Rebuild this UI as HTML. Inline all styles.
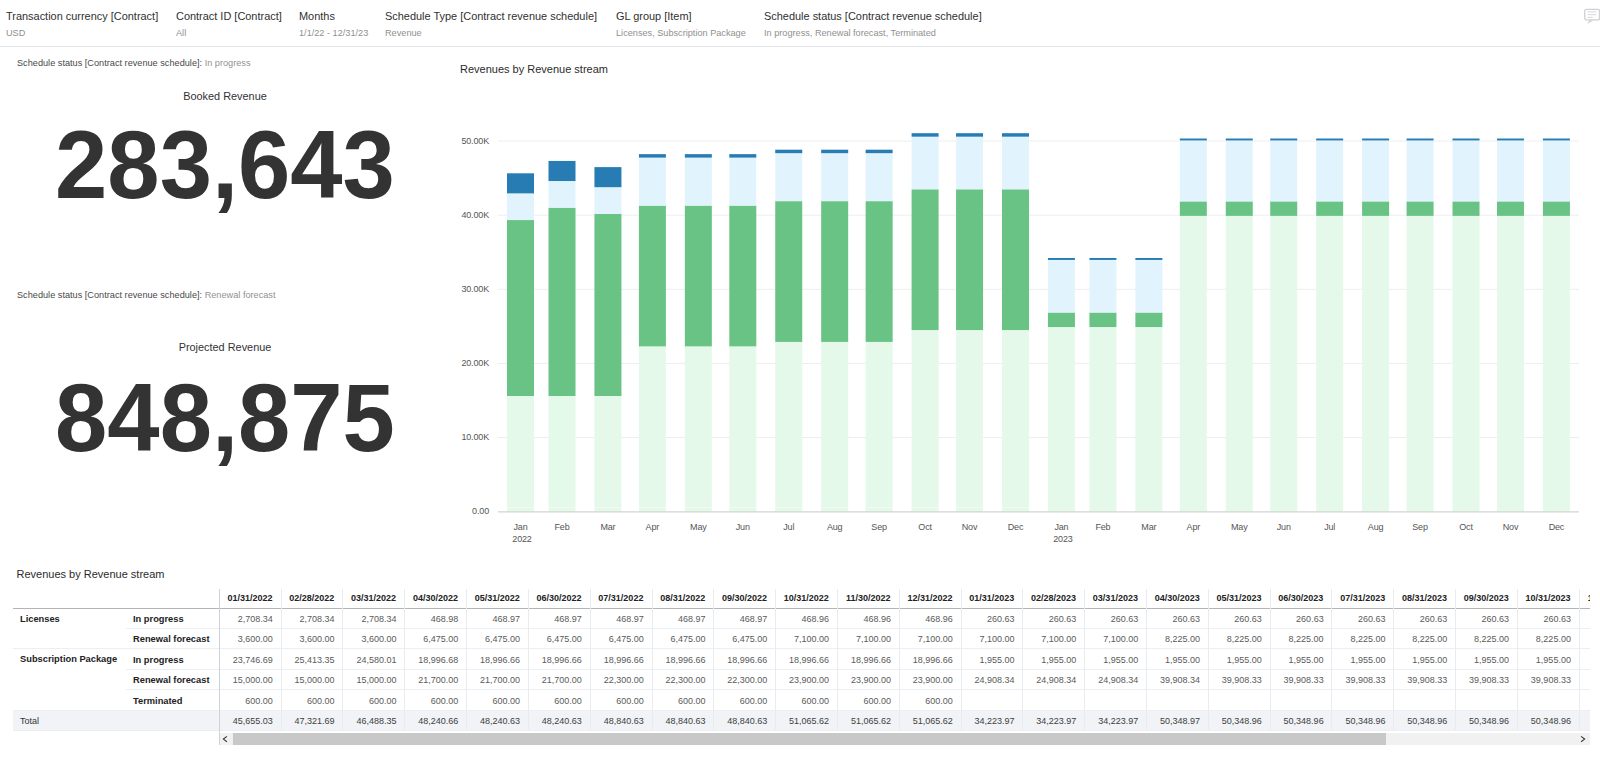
<!DOCTYPE html>
<html lang="en"><head><meta charset="utf-8"><title>Revenue dashboard</title>
<style>
*{box-sizing:border-box}
html,body{margin:0;padding:0;background:#fff}
body{width:1600px;height:758px;overflow:hidden;position:relative;font-family:"Liberation Sans",sans-serif;color:#333}
.hdr{position:absolute;left:0;top:0;width:1600px;height:47px;border-bottom:1px solid #e3e7ed}
.f{position:absolute;top:0;white-space:nowrap}
.f b{position:absolute;left:0;top:9px;font-weight:400;font-size:10.94px;line-height:14px;color:#303030}
.f i{position:absolute;left:0;top:27.5px;font-style:normal;font-size:9.17px;line-height:11px;color:#909090}
.cm{position:absolute;left:1584px;top:8px}
.sl{position:absolute;left:17px;font-size:9.19px;line-height:11px;color:#4a4a4a;white-space:nowrap}
.sl span{color:#929292}
.kt{position:absolute;left:0;width:450px;text-align:center;font-size:10.9px;line-height:14px;color:#333}
.kv{position:absolute;left:0;width:450px;text-align:center;font-weight:700;font-size:94px;line-height:100px;color:#333;white-space:nowrap;transform:scaleY(1.023);transform-origin:50% 50%}
.ct{position:absolute;font-size:11px;line-height:14px;color:#2b2b2b;white-space:nowrap}
.chart{position:absolute;left:0;top:0}
.ax{font-family:"Liberation Sans",sans-serif;font-size:9px;fill:#555;letter-spacing:-0.15px}
.tbl{position:absolute;left:0;top:0;width:1590px;height:758px;overflow:hidden}
.hl{position:absolute;height:1px}
.vl{position:absolute;width:1px;background:#e8ecf1}
.totbg{position:absolute;left:12.6px;width:1577.4px;background:#f1f3f7}
.th{position:absolute;text-align:right;padding-right:8.6px;font-weight:700;font-size:9px;color:#222;white-space:nowrap}
.td{position:absolute;text-align:right;padding-right:8.3px;font-size:9px;color:#5a5a5a;white-space:nowrap}
.td.tot{color:#404040}
.rh{position:absolute;font-weight:700;font-size:9.3px;color:#222;white-space:nowrap}
.rt{position:absolute;font-size:9px;color:#333;white-space:nowrap}
.sb{position:absolute;left:219.8px;top:733.4px;width:1370.2px;height:11.6px;background:#f1f1f1}
.thumb{position:absolute;left:12.9px;top:0;width:1153.5px;height:11.6px;background:#c8c8c8}
.arl{position:absolute;left:1.7px;top:0.8px}
.arr{position:absolute;left:1359.2px;top:0.8px}
</style></head><body>
<div class="hdr">
<div class="f" style="left:6px"><b>Transaction currency [Contract]</b><i>USD</i></div>
<div class="f" style="left:176px"><b>Contract ID [Contract]</b><i>All</i></div>
<div class="f" style="left:299px"><b>Months</b><i>1/1/22 - 12/31/23</i></div>
<div class="f" style="left:385px"><b>Schedule Type [Contract revenue schedule]</b><i>Revenue</i></div>
<div class="f" style="left:616px"><b>GL group [Item]</b><i>Licenses, Subscription Package</i></div>
<div class="f" style="left:764px"><b>Schedule status [Contract revenue schedule]</b><i>In progress, Renewal forecast, Terminated</i></div>
<svg class="cm" width="18" height="18" viewBox="0 0 18 18"><rect x="0.75" y="1.45" width="14.7" height="10.5" rx="1.6" fill="none" stroke="#cdd0d4" stroke-width="1.3"/><path d="M5.4 12.2 L3.3 15.9 L9.6 12.2 Z" fill="#cfd2d6"/><rect x="3.6" y="3.4" width="8.7" height="1" fill="#d6d8db"/><rect x="3.6" y="6.2" width="8.7" height="1" fill="#d6d8db"/><rect x="3.6" y="8.85" width="5.1" height="1" fill="#d6d8db"/></svg>
</div>
<div class="sl" style="top:58px">Schedule status [Contract revenue schedule]: <span>In progress</span></div>
<div class="kt" style="top:89px">Booked Revenue</div>
<div class="kv" style="top:115px">283,643</div>
<div class="sl" style="top:290px">Schedule status [Contract revenue schedule]: <span>Renewal forecast</span></div>
<div class="kt" style="top:340.4px">Projected Revenue</div>
<div class="kv" style="top:368px">848,875</div>
<div class="ct" style="left:460px;top:62px">Revenues by Revenue stream</div>
<svg class="chart" width="1600" height="758" viewBox="0 0 1600 758">
<rect x="498" y="437.00" width="1081" height="1" fill="#eeeeee"/>
<rect x="498" y="362.90" width="1081" height="1" fill="#eeeeee"/>
<rect x="498" y="288.80" width="1081" height="1" fill="#eeeeee"/>
<rect x="498" y="214.70" width="1081" height="1" fill="#eeeeee"/>
<rect x="498" y="140.60" width="1081" height="1" fill="#eeeeee"/>
<rect x="507.00" y="507.15" width="27" height="4.45" fill="#e5f9ea"/>
<rect x="507.00" y="506.70" width="27" height="0.9" fill="#f7fdf9"/>
<rect x="507.00" y="396.00" width="27" height="111.15" fill="#e5f9ea"/>
<rect x="507.00" y="220.04" width="27" height="175.96" fill="#69c385"/>
<rect x="507.00" y="193.37" width="27" height="26.68" fill="#e1f4fd"/>
<rect x="507.00" y="173.30" width="27" height="20.07" fill="#267cb3"/>
<rect x="548.50" y="507.15" width="27" height="4.45" fill="#e5f9ea"/>
<rect x="548.50" y="506.70" width="27" height="0.9" fill="#f7fdf9"/>
<rect x="548.50" y="396.00" width="27" height="111.15" fill="#e5f9ea"/>
<rect x="548.50" y="207.69" width="27" height="188.31" fill="#69c385"/>
<rect x="548.50" y="181.02" width="27" height="26.68" fill="#e1f4fd"/>
<rect x="548.50" y="160.95" width="27" height="20.07" fill="#267cb3"/>
<rect x="594.44" y="507.15" width="27" height="4.45" fill="#e5f9ea"/>
<rect x="594.44" y="506.70" width="27" height="0.9" fill="#f7fdf9"/>
<rect x="594.44" y="396.00" width="27" height="111.15" fill="#e5f9ea"/>
<rect x="594.44" y="213.87" width="27" height="182.14" fill="#69c385"/>
<rect x="594.44" y="187.19" width="27" height="26.68" fill="#e1f4fd"/>
<rect x="594.44" y="167.12" width="27" height="20.07" fill="#267cb3"/>
<rect x="638.90" y="507.15" width="27" height="4.45" fill="#e5f9ea"/>
<rect x="638.90" y="506.70" width="27" height="0.9" fill="#f7fdf9"/>
<rect x="638.90" y="346.36" width="27" height="160.80" fill="#e5f9ea"/>
<rect x="638.90" y="205.59" width="27" height="140.77" fill="#69c385"/>
<rect x="638.90" y="157.61" width="27" height="47.98" fill="#e1f4fd"/>
<rect x="638.90" y="154.14" width="27" height="3.48" fill="#267cb3"/>
<rect x="684.84" y="507.15" width="27" height="4.45" fill="#e5f9ea"/>
<rect x="684.84" y="506.70" width="27" height="0.9" fill="#f7fdf9"/>
<rect x="684.84" y="346.36" width="27" height="160.80" fill="#e5f9ea"/>
<rect x="684.84" y="205.59" width="27" height="140.77" fill="#69c385"/>
<rect x="684.84" y="157.61" width="27" height="47.98" fill="#e1f4fd"/>
<rect x="684.84" y="154.14" width="27" height="3.48" fill="#267cb3"/>
<rect x="729.30" y="507.15" width="27" height="4.45" fill="#e5f9ea"/>
<rect x="729.30" y="506.70" width="27" height="0.9" fill="#f7fdf9"/>
<rect x="729.30" y="346.36" width="27" height="160.80" fill="#e5f9ea"/>
<rect x="729.30" y="205.59" width="27" height="140.77" fill="#69c385"/>
<rect x="729.30" y="157.61" width="27" height="47.98" fill="#e1f4fd"/>
<rect x="729.30" y="154.14" width="27" height="3.48" fill="#267cb3"/>
<rect x="775.24" y="507.15" width="27" height="4.45" fill="#e5f9ea"/>
<rect x="775.24" y="506.70" width="27" height="0.9" fill="#f7fdf9"/>
<rect x="775.24" y="341.91" width="27" height="165.24" fill="#e5f9ea"/>
<rect x="775.24" y="201.15" width="27" height="140.77" fill="#69c385"/>
<rect x="775.24" y="153.17" width="27" height="47.98" fill="#e1f4fd"/>
<rect x="775.24" y="149.69" width="27" height="3.48" fill="#267cb3"/>
<rect x="821.18" y="507.15" width="27" height="4.45" fill="#e5f9ea"/>
<rect x="821.18" y="506.70" width="27" height="0.9" fill="#f7fdf9"/>
<rect x="821.18" y="341.91" width="27" height="165.24" fill="#e5f9ea"/>
<rect x="821.18" y="201.15" width="27" height="140.77" fill="#69c385"/>
<rect x="821.18" y="153.17" width="27" height="47.98" fill="#e1f4fd"/>
<rect x="821.18" y="149.69" width="27" height="3.48" fill="#267cb3"/>
<rect x="865.64" y="507.15" width="27" height="4.45" fill="#e5f9ea"/>
<rect x="865.64" y="506.70" width="27" height="0.9" fill="#f7fdf9"/>
<rect x="865.64" y="341.91" width="27" height="165.24" fill="#e5f9ea"/>
<rect x="865.64" y="201.15" width="27" height="140.77" fill="#69c385"/>
<rect x="865.64" y="153.17" width="27" height="47.98" fill="#e1f4fd"/>
<rect x="865.64" y="149.69" width="27" height="3.48" fill="#267cb3"/>
<rect x="911.59" y="507.15" width="27" height="4.45" fill="#e5f9ea"/>
<rect x="911.59" y="506.70" width="27" height="0.9" fill="#f7fdf9"/>
<rect x="911.59" y="330.06" width="27" height="177.10" fill="#e5f9ea"/>
<rect x="911.59" y="189.29" width="27" height="140.77" fill="#69c385"/>
<rect x="911.59" y="136.68" width="27" height="52.61" fill="#e1f4fd"/>
<rect x="911.59" y="133.20" width="27" height="3.47" fill="#267cb3"/>
<rect x="956.05" y="507.15" width="27" height="4.45" fill="#e5f9ea"/>
<rect x="956.05" y="506.70" width="27" height="0.9" fill="#f7fdf9"/>
<rect x="956.05" y="330.06" width="27" height="177.10" fill="#e5f9ea"/>
<rect x="956.05" y="189.29" width="27" height="140.77" fill="#69c385"/>
<rect x="956.05" y="136.68" width="27" height="52.61" fill="#e1f4fd"/>
<rect x="956.05" y="133.20" width="27" height="3.47" fill="#267cb3"/>
<rect x="1001.99" y="507.15" width="27" height="4.45" fill="#e5f9ea"/>
<rect x="1001.99" y="506.70" width="27" height="0.9" fill="#f7fdf9"/>
<rect x="1001.99" y="330.06" width="27" height="177.10" fill="#e5f9ea"/>
<rect x="1001.99" y="189.29" width="27" height="140.77" fill="#69c385"/>
<rect x="1001.99" y="136.68" width="27" height="52.61" fill="#e1f4fd"/>
<rect x="1001.99" y="133.20" width="27" height="3.47" fill="#267cb3"/>
<rect x="1047.93" y="327.03" width="27" height="184.57" fill="#e5f9ea"/>
<rect x="1047.93" y="312.54" width="27" height="14.49" fill="#69c385"/>
<rect x="1047.93" y="259.93" width="27" height="52.61" fill="#e1f4fd"/>
<rect x="1047.93" y="258.00" width="27" height="1.93" fill="#267cb3"/>
<rect x="1089.43" y="327.03" width="27" height="184.57" fill="#e5f9ea"/>
<rect x="1089.43" y="312.54" width="27" height="14.49" fill="#69c385"/>
<rect x="1089.43" y="259.93" width="27" height="52.61" fill="#e1f4fd"/>
<rect x="1089.43" y="258.00" width="27" height="1.93" fill="#267cb3"/>
<rect x="1135.37" y="327.03" width="27" height="184.57" fill="#e5f9ea"/>
<rect x="1135.37" y="312.54" width="27" height="14.49" fill="#69c385"/>
<rect x="1135.37" y="259.93" width="27" height="52.61" fill="#e1f4fd"/>
<rect x="1135.37" y="258.00" width="27" height="1.93" fill="#267cb3"/>
<rect x="1179.83" y="215.88" width="27" height="295.72" fill="#e5f9ea"/>
<rect x="1179.83" y="201.39" width="27" height="14.49" fill="#69c385"/>
<rect x="1179.83" y="140.45" width="27" height="60.95" fill="#e1f4fd"/>
<rect x="1179.83" y="138.51" width="27" height="1.93" fill="#267cb3"/>
<rect x="1225.77" y="215.88" width="27" height="295.72" fill="#e5f9ea"/>
<rect x="1225.77" y="201.39" width="27" height="14.49" fill="#69c385"/>
<rect x="1225.77" y="140.45" width="27" height="60.95" fill="#e1f4fd"/>
<rect x="1225.77" y="138.51" width="27" height="1.93" fill="#267cb3"/>
<rect x="1270.23" y="215.88" width="27" height="295.72" fill="#e5f9ea"/>
<rect x="1270.23" y="201.39" width="27" height="14.49" fill="#69c385"/>
<rect x="1270.23" y="140.45" width="27" height="60.95" fill="#e1f4fd"/>
<rect x="1270.23" y="138.51" width="27" height="1.93" fill="#267cb3"/>
<rect x="1316.17" y="215.88" width="27" height="295.72" fill="#e5f9ea"/>
<rect x="1316.17" y="201.39" width="27" height="14.49" fill="#69c385"/>
<rect x="1316.17" y="140.45" width="27" height="60.95" fill="#e1f4fd"/>
<rect x="1316.17" y="138.51" width="27" height="1.93" fill="#267cb3"/>
<rect x="1362.11" y="215.88" width="27" height="295.72" fill="#e5f9ea"/>
<rect x="1362.11" y="201.39" width="27" height="14.49" fill="#69c385"/>
<rect x="1362.11" y="140.45" width="27" height="60.95" fill="#e1f4fd"/>
<rect x="1362.11" y="138.51" width="27" height="1.93" fill="#267cb3"/>
<rect x="1406.57" y="215.88" width="27" height="295.72" fill="#e5f9ea"/>
<rect x="1406.57" y="201.39" width="27" height="14.49" fill="#69c385"/>
<rect x="1406.57" y="140.45" width="27" height="60.95" fill="#e1f4fd"/>
<rect x="1406.57" y="138.51" width="27" height="1.93" fill="#267cb3"/>
<rect x="1452.52" y="215.88" width="27" height="295.72" fill="#e5f9ea"/>
<rect x="1452.52" y="201.39" width="27" height="14.49" fill="#69c385"/>
<rect x="1452.52" y="140.45" width="27" height="60.95" fill="#e1f4fd"/>
<rect x="1452.52" y="138.51" width="27" height="1.93" fill="#267cb3"/>
<rect x="1496.98" y="215.88" width="27" height="295.72" fill="#e5f9ea"/>
<rect x="1496.98" y="201.39" width="27" height="14.49" fill="#69c385"/>
<rect x="1496.98" y="140.45" width="27" height="60.95" fill="#e1f4fd"/>
<rect x="1496.98" y="138.51" width="27" height="1.93" fill="#267cb3"/>
<rect x="1542.92" y="215.88" width="27" height="295.72" fill="#e5f9ea"/>
<rect x="1542.92" y="201.39" width="27" height="14.49" fill="#69c385"/>
<rect x="1542.92" y="140.45" width="27" height="60.95" fill="#e1f4fd"/>
<rect x="1542.92" y="138.51" width="27" height="1.93" fill="#267cb3"/>
<rect x="498" y="511.40" width="1081" height="1" fill="#c8c8c8"/>
<text class="ax" x="489" y="514.20" text-anchor="end">0.00</text>
<text class="ax" x="489" y="440.10" text-anchor="end">10.00K</text>
<text class="ax" x="489" y="366.00" text-anchor="end">20.00K</text>
<text class="ax" x="489" y="291.90" text-anchor="end">30.00K</text>
<text class="ax" x="489" y="217.80" text-anchor="end">40.00K</text>
<text class="ax" x="489" y="143.70" text-anchor="end">50.00K</text>
<text class="ax" x="520.50" y="530" text-anchor="middle">Jan</text>
<text class="ax" x="522.00" y="542" text-anchor="middle">2022</text>
<text class="ax" x="562.00" y="530" text-anchor="middle">Feb</text>
<text class="ax" x="607.94" y="530" text-anchor="middle">Mar</text>
<text class="ax" x="652.40" y="530" text-anchor="middle">Apr</text>
<text class="ax" x="698.34" y="530" text-anchor="middle">May</text>
<text class="ax" x="742.80" y="530" text-anchor="middle">Jun</text>
<text class="ax" x="788.74" y="530" text-anchor="middle">Jul</text>
<text class="ax" x="834.68" y="530" text-anchor="middle">Aug</text>
<text class="ax" x="879.14" y="530" text-anchor="middle">Sep</text>
<text class="ax" x="925.09" y="530" text-anchor="middle">Oct</text>
<text class="ax" x="969.55" y="530" text-anchor="middle">Nov</text>
<text class="ax" x="1015.49" y="530" text-anchor="middle">Dec</text>
<text class="ax" x="1061.43" y="530" text-anchor="middle">Jan</text>
<text class="ax" x="1062.93" y="542" text-anchor="middle">2023</text>
<text class="ax" x="1102.93" y="530" text-anchor="middle">Feb</text>
<text class="ax" x="1148.87" y="530" text-anchor="middle">Mar</text>
<text class="ax" x="1193.33" y="530" text-anchor="middle">Apr</text>
<text class="ax" x="1239.27" y="530" text-anchor="middle">May</text>
<text class="ax" x="1283.73" y="530" text-anchor="middle">Jun</text>
<text class="ax" x="1329.67" y="530" text-anchor="middle">Jul</text>
<text class="ax" x="1375.61" y="530" text-anchor="middle">Aug</text>
<text class="ax" x="1420.07" y="530" text-anchor="middle">Sep</text>
<text class="ax" x="1466.02" y="530" text-anchor="middle">Oct</text>
<text class="ax" x="1510.48" y="530" text-anchor="middle">Nov</text>
<text class="ax" x="1556.42" y="530" text-anchor="middle">Dec</text>
</svg>
<div class="ct" style="left:16.5px;top:567px">Revenues by Revenue stream</div>
<div class="tbl">
<div class="totbg" style="top:710.20px;height:20.20px"></div>
<div class="hl" style="left:12.6px;top:607.80px;width:1577.4px;background:#b4b4b4"></div>
<div class="hl" style="left:125.5px;top:628.40px;width:1464.5px;background:#ebeef3"></div>
<div class="hl" style="left:12.6px;top:648.40px;width:1577.4px;background:#ebeef3"></div>
<div class="hl" style="left:125.5px;top:669.20px;width:1464.5px;background:#ebeef3"></div>
<div class="hl" style="left:125.5px;top:689.30px;width:1464.5px;background:#ebeef3"></div>
<div class="hl" style="left:12.6px;top:709.70px;width:1577.4px;background:#ebeef3"></div>
<div class="hl" style="left:12.6px;top:729.90px;width:1577.4px;background:#ebeef3"></div>
<div class="vl" style="left:218.80px;top:588.6px;height:156.40px;background:#cdd3db"></div>
<div class="vl" style="left:280.62px;top:588.6px;height:141.80px"></div>
<div class="vl" style="left:342.43px;top:588.6px;height:141.80px"></div>
<div class="vl" style="left:404.25px;top:588.6px;height:141.80px"></div>
<div class="vl" style="left:466.06px;top:588.6px;height:141.80px"></div>
<div class="vl" style="left:527.88px;top:588.6px;height:141.80px"></div>
<div class="vl" style="left:589.69px;top:588.6px;height:141.80px"></div>
<div class="vl" style="left:651.50px;top:588.6px;height:141.80px"></div>
<div class="vl" style="left:713.32px;top:588.6px;height:141.80px"></div>
<div class="vl" style="left:775.13px;top:588.6px;height:141.80px"></div>
<div class="vl" style="left:836.95px;top:588.6px;height:141.80px"></div>
<div class="vl" style="left:898.76px;top:588.6px;height:141.80px"></div>
<div class="vl" style="left:960.58px;top:588.6px;height:141.80px"></div>
<div class="vl" style="left:1022.39px;top:588.6px;height:141.80px"></div>
<div class="vl" style="left:1084.21px;top:588.6px;height:141.80px"></div>
<div class="vl" style="left:1146.02px;top:588.6px;height:141.80px"></div>
<div class="vl" style="left:1207.84px;top:588.6px;height:141.80px"></div>
<div class="vl" style="left:1269.65px;top:588.6px;height:141.80px"></div>
<div class="vl" style="left:1331.47px;top:588.6px;height:141.80px"></div>
<div class="vl" style="left:1393.28px;top:588.6px;height:141.80px"></div>
<div class="vl" style="left:1455.10px;top:588.6px;height:141.80px"></div>
<div class="vl" style="left:1516.91px;top:588.6px;height:141.80px"></div>
<div class="vl" style="left:1578.73px;top:588.6px;height:141.80px"></div>
<div class="th" style="left:219.30px;top:589.10px;width:61.81px;height:19.70px;line-height:19.70px">01/31/2022</div>
<div class="td" style="left:219.30px;top:608.70px;width:61.81px;height:20.60px;line-height:20.60px">2,708.34</div>
<div class="td" style="left:219.30px;top:629.30px;width:61.81px;height:20.00px;line-height:20.00px">3,600.00</div>
<div class="td" style="left:219.30px;top:650.30px;width:61.81px;height:20.80px;line-height:20.80px">23,746.69</div>
<div class="td" style="left:219.30px;top:670.20px;width:61.81px;height:20.10px;line-height:20.10px">15,000.00</div>
<div class="td" style="left:219.30px;top:691.00px;width:61.81px;height:20.40px;line-height:20.40px">600.00</div>
<div class="td tot" style="left:219.30px;top:710.70px;width:61.81px;height:20.20px;line-height:20.20px">45,655.03</div>
<div class="th" style="left:281.12px;top:589.10px;width:61.81px;height:19.70px;line-height:19.70px">02/28/2022</div>
<div class="td" style="left:281.12px;top:608.70px;width:61.81px;height:20.60px;line-height:20.60px">2,708.34</div>
<div class="td" style="left:281.12px;top:629.30px;width:61.81px;height:20.00px;line-height:20.00px">3,600.00</div>
<div class="td" style="left:281.12px;top:650.30px;width:61.81px;height:20.80px;line-height:20.80px">25,413.35</div>
<div class="td" style="left:281.12px;top:670.20px;width:61.81px;height:20.10px;line-height:20.10px">15,000.00</div>
<div class="td" style="left:281.12px;top:691.00px;width:61.81px;height:20.40px;line-height:20.40px">600.00</div>
<div class="td tot" style="left:281.12px;top:710.70px;width:61.81px;height:20.20px;line-height:20.20px">47,321.69</div>
<div class="th" style="left:342.93px;top:589.10px;width:61.81px;height:19.70px;line-height:19.70px">03/31/2022</div>
<div class="td" style="left:342.93px;top:608.70px;width:61.81px;height:20.60px;line-height:20.60px">2,708.34</div>
<div class="td" style="left:342.93px;top:629.30px;width:61.81px;height:20.00px;line-height:20.00px">3,600.00</div>
<div class="td" style="left:342.93px;top:650.30px;width:61.81px;height:20.80px;line-height:20.80px">24,580.01</div>
<div class="td" style="left:342.93px;top:670.20px;width:61.81px;height:20.10px;line-height:20.10px">15,000.00</div>
<div class="td" style="left:342.93px;top:691.00px;width:61.81px;height:20.40px;line-height:20.40px">600.00</div>
<div class="td tot" style="left:342.93px;top:710.70px;width:61.81px;height:20.20px;line-height:20.20px">46,488.35</div>
<div class="th" style="left:404.75px;top:589.10px;width:61.81px;height:19.70px;line-height:19.70px">04/30/2022</div>
<div class="td" style="left:404.75px;top:608.70px;width:61.81px;height:20.60px;line-height:20.60px">468.98</div>
<div class="td" style="left:404.75px;top:629.30px;width:61.81px;height:20.00px;line-height:20.00px">6,475.00</div>
<div class="td" style="left:404.75px;top:650.30px;width:61.81px;height:20.80px;line-height:20.80px">18,996.68</div>
<div class="td" style="left:404.75px;top:670.20px;width:61.81px;height:20.10px;line-height:20.10px">21,700.00</div>
<div class="td" style="left:404.75px;top:691.00px;width:61.81px;height:20.40px;line-height:20.40px">600.00</div>
<div class="td tot" style="left:404.75px;top:710.70px;width:61.81px;height:20.20px;line-height:20.20px">48,240.66</div>
<div class="th" style="left:466.56px;top:589.10px;width:61.81px;height:19.70px;line-height:19.70px">05/31/2022</div>
<div class="td" style="left:466.56px;top:608.70px;width:61.81px;height:20.60px;line-height:20.60px">468.97</div>
<div class="td" style="left:466.56px;top:629.30px;width:61.81px;height:20.00px;line-height:20.00px">6,475.00</div>
<div class="td" style="left:466.56px;top:650.30px;width:61.81px;height:20.80px;line-height:20.80px">18,996.66</div>
<div class="td" style="left:466.56px;top:670.20px;width:61.81px;height:20.10px;line-height:20.10px">21,700.00</div>
<div class="td" style="left:466.56px;top:691.00px;width:61.81px;height:20.40px;line-height:20.40px">600.00</div>
<div class="td tot" style="left:466.56px;top:710.70px;width:61.81px;height:20.20px;line-height:20.20px">48,240.63</div>
<div class="th" style="left:528.38px;top:589.10px;width:61.81px;height:19.70px;line-height:19.70px">06/30/2022</div>
<div class="td" style="left:528.38px;top:608.70px;width:61.81px;height:20.60px;line-height:20.60px">468.97</div>
<div class="td" style="left:528.38px;top:629.30px;width:61.81px;height:20.00px;line-height:20.00px">6,475.00</div>
<div class="td" style="left:528.38px;top:650.30px;width:61.81px;height:20.80px;line-height:20.80px">18,996.66</div>
<div class="td" style="left:528.38px;top:670.20px;width:61.81px;height:20.10px;line-height:20.10px">21,700.00</div>
<div class="td" style="left:528.38px;top:691.00px;width:61.81px;height:20.40px;line-height:20.40px">600.00</div>
<div class="td tot" style="left:528.38px;top:710.70px;width:61.81px;height:20.20px;line-height:20.20px">48,240.63</div>
<div class="th" style="left:590.19px;top:589.10px;width:61.81px;height:19.70px;line-height:19.70px">07/31/2022</div>
<div class="td" style="left:590.19px;top:608.70px;width:61.81px;height:20.60px;line-height:20.60px">468.97</div>
<div class="td" style="left:590.19px;top:629.30px;width:61.81px;height:20.00px;line-height:20.00px">6,475.00</div>
<div class="td" style="left:590.19px;top:650.30px;width:61.81px;height:20.80px;line-height:20.80px">18,996.66</div>
<div class="td" style="left:590.19px;top:670.20px;width:61.81px;height:20.10px;line-height:20.10px">22,300.00</div>
<div class="td" style="left:590.19px;top:691.00px;width:61.81px;height:20.40px;line-height:20.40px">600.00</div>
<div class="td tot" style="left:590.19px;top:710.70px;width:61.81px;height:20.20px;line-height:20.20px">48,840.63</div>
<div class="th" style="left:652.00px;top:589.10px;width:61.81px;height:19.70px;line-height:19.70px">08/31/2022</div>
<div class="td" style="left:652.00px;top:608.70px;width:61.81px;height:20.60px;line-height:20.60px">468.97</div>
<div class="td" style="left:652.00px;top:629.30px;width:61.81px;height:20.00px;line-height:20.00px">6,475.00</div>
<div class="td" style="left:652.00px;top:650.30px;width:61.81px;height:20.80px;line-height:20.80px">18,996.66</div>
<div class="td" style="left:652.00px;top:670.20px;width:61.81px;height:20.10px;line-height:20.10px">22,300.00</div>
<div class="td" style="left:652.00px;top:691.00px;width:61.81px;height:20.40px;line-height:20.40px">600.00</div>
<div class="td tot" style="left:652.00px;top:710.70px;width:61.81px;height:20.20px;line-height:20.20px">48,840.63</div>
<div class="th" style="left:713.82px;top:589.10px;width:61.81px;height:19.70px;line-height:19.70px">09/30/2022</div>
<div class="td" style="left:713.82px;top:608.70px;width:61.81px;height:20.60px;line-height:20.60px">468.97</div>
<div class="td" style="left:713.82px;top:629.30px;width:61.81px;height:20.00px;line-height:20.00px">6,475.00</div>
<div class="td" style="left:713.82px;top:650.30px;width:61.81px;height:20.80px;line-height:20.80px">18,996.66</div>
<div class="td" style="left:713.82px;top:670.20px;width:61.81px;height:20.10px;line-height:20.10px">22,300.00</div>
<div class="td" style="left:713.82px;top:691.00px;width:61.81px;height:20.40px;line-height:20.40px">600.00</div>
<div class="td tot" style="left:713.82px;top:710.70px;width:61.81px;height:20.20px;line-height:20.20px">48,840.63</div>
<div class="th" style="left:775.63px;top:589.10px;width:61.81px;height:19.70px;line-height:19.70px">10/31/2022</div>
<div class="td" style="left:775.63px;top:608.70px;width:61.81px;height:20.60px;line-height:20.60px">468.96</div>
<div class="td" style="left:775.63px;top:629.30px;width:61.81px;height:20.00px;line-height:20.00px">7,100.00</div>
<div class="td" style="left:775.63px;top:650.30px;width:61.81px;height:20.80px;line-height:20.80px">18,996.66</div>
<div class="td" style="left:775.63px;top:670.20px;width:61.81px;height:20.10px;line-height:20.10px">23,900.00</div>
<div class="td" style="left:775.63px;top:691.00px;width:61.81px;height:20.40px;line-height:20.40px">600.00</div>
<div class="td tot" style="left:775.63px;top:710.70px;width:61.81px;height:20.20px;line-height:20.20px">51,065.62</div>
<div class="th" style="left:837.45px;top:589.10px;width:61.81px;height:19.70px;line-height:19.70px">11/30/2022</div>
<div class="td" style="left:837.45px;top:608.70px;width:61.81px;height:20.60px;line-height:20.60px">468.96</div>
<div class="td" style="left:837.45px;top:629.30px;width:61.81px;height:20.00px;line-height:20.00px">7,100.00</div>
<div class="td" style="left:837.45px;top:650.30px;width:61.81px;height:20.80px;line-height:20.80px">18,996.66</div>
<div class="td" style="left:837.45px;top:670.20px;width:61.81px;height:20.10px;line-height:20.10px">23,900.00</div>
<div class="td" style="left:837.45px;top:691.00px;width:61.81px;height:20.40px;line-height:20.40px">600.00</div>
<div class="td tot" style="left:837.45px;top:710.70px;width:61.81px;height:20.20px;line-height:20.20px">51,065.62</div>
<div class="th" style="left:899.26px;top:589.10px;width:61.81px;height:19.70px;line-height:19.70px">12/31/2022</div>
<div class="td" style="left:899.26px;top:608.70px;width:61.81px;height:20.60px;line-height:20.60px">468.96</div>
<div class="td" style="left:899.26px;top:629.30px;width:61.81px;height:20.00px;line-height:20.00px">7,100.00</div>
<div class="td" style="left:899.26px;top:650.30px;width:61.81px;height:20.80px;line-height:20.80px">18,996.66</div>
<div class="td" style="left:899.26px;top:670.20px;width:61.81px;height:20.10px;line-height:20.10px">23,900.00</div>
<div class="td" style="left:899.26px;top:691.00px;width:61.81px;height:20.40px;line-height:20.40px">600.00</div>
<div class="td tot" style="left:899.26px;top:710.70px;width:61.81px;height:20.20px;line-height:20.20px">51,065.62</div>
<div class="th" style="left:961.08px;top:589.10px;width:61.81px;height:19.70px;line-height:19.70px">01/31/2023</div>
<div class="td" style="left:961.08px;top:608.70px;width:61.81px;height:20.60px;line-height:20.60px">260.63</div>
<div class="td" style="left:961.08px;top:629.30px;width:61.81px;height:20.00px;line-height:20.00px">7,100.00</div>
<div class="td" style="left:961.08px;top:650.30px;width:61.81px;height:20.80px;line-height:20.80px">1,955.00</div>
<div class="td" style="left:961.08px;top:670.20px;width:61.81px;height:20.10px;line-height:20.10px">24,908.34</div>
<div class="td tot" style="left:961.08px;top:710.70px;width:61.81px;height:20.20px;line-height:20.20px">34,223.97</div>
<div class="th" style="left:1022.89px;top:589.10px;width:61.81px;height:19.70px;line-height:19.70px">02/28/2023</div>
<div class="td" style="left:1022.89px;top:608.70px;width:61.81px;height:20.60px;line-height:20.60px">260.63</div>
<div class="td" style="left:1022.89px;top:629.30px;width:61.81px;height:20.00px;line-height:20.00px">7,100.00</div>
<div class="td" style="left:1022.89px;top:650.30px;width:61.81px;height:20.80px;line-height:20.80px">1,955.00</div>
<div class="td" style="left:1022.89px;top:670.20px;width:61.81px;height:20.10px;line-height:20.10px">24,908.34</div>
<div class="td tot" style="left:1022.89px;top:710.70px;width:61.81px;height:20.20px;line-height:20.20px">34,223.97</div>
<div class="th" style="left:1084.71px;top:589.10px;width:61.81px;height:19.70px;line-height:19.70px">03/31/2023</div>
<div class="td" style="left:1084.71px;top:608.70px;width:61.81px;height:20.60px;line-height:20.60px">260.63</div>
<div class="td" style="left:1084.71px;top:629.30px;width:61.81px;height:20.00px;line-height:20.00px">7,100.00</div>
<div class="td" style="left:1084.71px;top:650.30px;width:61.81px;height:20.80px;line-height:20.80px">1,955.00</div>
<div class="td" style="left:1084.71px;top:670.20px;width:61.81px;height:20.10px;line-height:20.10px">24,908.34</div>
<div class="td tot" style="left:1084.71px;top:710.70px;width:61.81px;height:20.20px;line-height:20.20px">34,223.97</div>
<div class="th" style="left:1146.52px;top:589.10px;width:61.81px;height:19.70px;line-height:19.70px">04/30/2023</div>
<div class="td" style="left:1146.52px;top:608.70px;width:61.81px;height:20.60px;line-height:20.60px">260.63</div>
<div class="td" style="left:1146.52px;top:629.30px;width:61.81px;height:20.00px;line-height:20.00px">8,225.00</div>
<div class="td" style="left:1146.52px;top:650.30px;width:61.81px;height:20.80px;line-height:20.80px">1,955.00</div>
<div class="td" style="left:1146.52px;top:670.20px;width:61.81px;height:20.10px;line-height:20.10px">39,908.34</div>
<div class="td tot" style="left:1146.52px;top:710.70px;width:61.81px;height:20.20px;line-height:20.20px">50,348.97</div>
<div class="th" style="left:1208.34px;top:589.10px;width:61.81px;height:19.70px;line-height:19.70px">05/31/2023</div>
<div class="td" style="left:1208.34px;top:608.70px;width:61.81px;height:20.60px;line-height:20.60px">260.63</div>
<div class="td" style="left:1208.34px;top:629.30px;width:61.81px;height:20.00px;line-height:20.00px">8,225.00</div>
<div class="td" style="left:1208.34px;top:650.30px;width:61.81px;height:20.80px;line-height:20.80px">1,955.00</div>
<div class="td" style="left:1208.34px;top:670.20px;width:61.81px;height:20.10px;line-height:20.10px">39,908.33</div>
<div class="td tot" style="left:1208.34px;top:710.70px;width:61.81px;height:20.20px;line-height:20.20px">50,348.96</div>
<div class="th" style="left:1270.15px;top:589.10px;width:61.81px;height:19.70px;line-height:19.70px">06/30/2023</div>
<div class="td" style="left:1270.15px;top:608.70px;width:61.81px;height:20.60px;line-height:20.60px">260.63</div>
<div class="td" style="left:1270.15px;top:629.30px;width:61.81px;height:20.00px;line-height:20.00px">8,225.00</div>
<div class="td" style="left:1270.15px;top:650.30px;width:61.81px;height:20.80px;line-height:20.80px">1,955.00</div>
<div class="td" style="left:1270.15px;top:670.20px;width:61.81px;height:20.10px;line-height:20.10px">39,908.33</div>
<div class="td tot" style="left:1270.15px;top:710.70px;width:61.81px;height:20.20px;line-height:20.20px">50,348.96</div>
<div class="th" style="left:1331.97px;top:589.10px;width:61.81px;height:19.70px;line-height:19.70px">07/31/2023</div>
<div class="td" style="left:1331.97px;top:608.70px;width:61.81px;height:20.60px;line-height:20.60px">260.63</div>
<div class="td" style="left:1331.97px;top:629.30px;width:61.81px;height:20.00px;line-height:20.00px">8,225.00</div>
<div class="td" style="left:1331.97px;top:650.30px;width:61.81px;height:20.80px;line-height:20.80px">1,955.00</div>
<div class="td" style="left:1331.97px;top:670.20px;width:61.81px;height:20.10px;line-height:20.10px">39,908.33</div>
<div class="td tot" style="left:1331.97px;top:710.70px;width:61.81px;height:20.20px;line-height:20.20px">50,348.96</div>
<div class="th" style="left:1393.78px;top:589.10px;width:61.81px;height:19.70px;line-height:19.70px">08/31/2023</div>
<div class="td" style="left:1393.78px;top:608.70px;width:61.81px;height:20.60px;line-height:20.60px">260.63</div>
<div class="td" style="left:1393.78px;top:629.30px;width:61.81px;height:20.00px;line-height:20.00px">8,225.00</div>
<div class="td" style="left:1393.78px;top:650.30px;width:61.81px;height:20.80px;line-height:20.80px">1,955.00</div>
<div class="td" style="left:1393.78px;top:670.20px;width:61.81px;height:20.10px;line-height:20.10px">39,908.33</div>
<div class="td tot" style="left:1393.78px;top:710.70px;width:61.81px;height:20.20px;line-height:20.20px">50,348.96</div>
<div class="th" style="left:1455.60px;top:589.10px;width:61.81px;height:19.70px;line-height:19.70px">09/30/2023</div>
<div class="td" style="left:1455.60px;top:608.70px;width:61.81px;height:20.60px;line-height:20.60px">260.63</div>
<div class="td" style="left:1455.60px;top:629.30px;width:61.81px;height:20.00px;line-height:20.00px">8,225.00</div>
<div class="td" style="left:1455.60px;top:650.30px;width:61.81px;height:20.80px;line-height:20.80px">1,955.00</div>
<div class="td" style="left:1455.60px;top:670.20px;width:61.81px;height:20.10px;line-height:20.10px">39,908.33</div>
<div class="td tot" style="left:1455.60px;top:710.70px;width:61.81px;height:20.20px;line-height:20.20px">50,348.96</div>
<div class="th" style="left:1517.41px;top:589.10px;width:61.81px;height:19.70px;line-height:19.70px">10/31/2023</div>
<div class="td" style="left:1517.41px;top:608.70px;width:61.81px;height:20.60px;line-height:20.60px">260.63</div>
<div class="td" style="left:1517.41px;top:629.30px;width:61.81px;height:20.00px;line-height:20.00px">8,225.00</div>
<div class="td" style="left:1517.41px;top:650.30px;width:61.81px;height:20.80px;line-height:20.80px">1,955.00</div>
<div class="td" style="left:1517.41px;top:670.20px;width:61.81px;height:20.10px;line-height:20.10px">39,908.33</div>
<div class="td tot" style="left:1517.41px;top:710.70px;width:61.81px;height:20.20px;line-height:20.20px">50,348.96</div>
<div class="th" style="left:1579.23px;top:589.10px;width:61.81px;height:19.70px;line-height:19.70px">11/30/2023</div>
<div class="td" style="left:1579.23px;top:608.70px;width:61.81px;height:20.60px;line-height:20.60px">260.63</div>
<div class="td" style="left:1579.23px;top:629.30px;width:61.81px;height:20.00px;line-height:20.00px">8,225.00</div>
<div class="td" style="left:1579.23px;top:650.30px;width:61.81px;height:20.80px;line-height:20.80px">1,955.00</div>
<div class="td" style="left:1579.23px;top:670.20px;width:61.81px;height:20.10px;line-height:20.10px">39,908.33</div>
<div class="td tot" style="left:1579.23px;top:710.70px;width:61.81px;height:20.20px;line-height:20.20px">50,348.96</div>
<div class="rh" style="left:20px;top:609.30px;height:20.60px;line-height:20.60px">Licenses</div>
<div class="rh" style="left:133px;top:608.70px;height:20.60px;line-height:20.60px">In progress</div>
<div class="rh" style="left:133px;top:629.30px;height:20.00px;line-height:20.00px">Renewal forecast</div>
<div class="rh" style="left:20px;top:649.40px;height:20.80px;line-height:20.80px">Subscription Package</div>
<div class="rh" style="left:133px;top:650.30px;height:20.80px;line-height:20.80px">In progress</div>
<div class="rh" style="left:133px;top:670.20px;height:20.10px;line-height:20.10px">Renewal forecast</div>
<div class="rh" style="left:133px;top:691.00px;height:20.40px;line-height:20.40px">Terminated</div>
<div class="rt" style="left:20px;top:710.70px;height:20.20px;line-height:20.20px">Total</div>
</div>
<div class="sb"><div class="thumb"></div><svg class="arl" width="8" height="10" viewBox="0 0 8 10"><path d="M5.9 2.4 L2.4 5.1 L5.9 7.8" fill="none" stroke="#3a3a3a" stroke-width="1.15"/></svg><svg class="arr" width="8" height="10" viewBox="0 0 8 10"><path d="M2.1 2.4 L5.6 5.1 L2.1 7.8" fill="none" stroke="#3a3a3a" stroke-width="1.15"/></svg></div>
</body></html>
